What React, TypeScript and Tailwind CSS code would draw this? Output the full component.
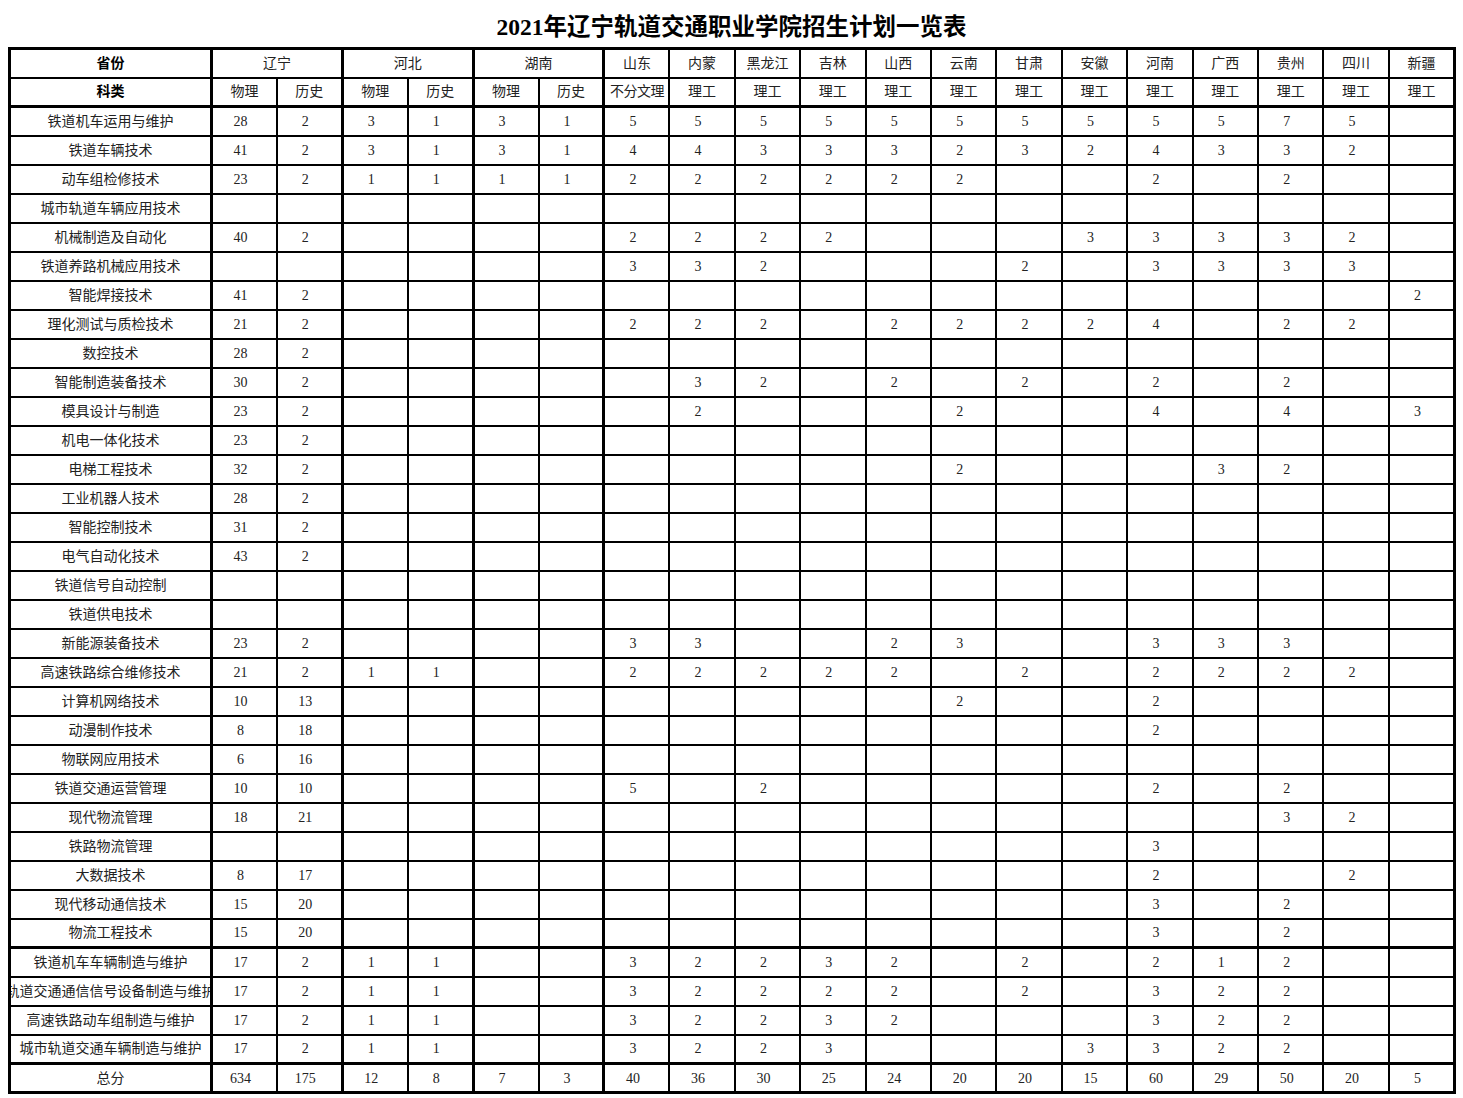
const regions = ["山东", "内蒙", "黑龙江", "吉林", "山西", "云南", "甘肃", "安徽", "河南", "广西", "贵州", "四川", "新疆"];

type Row = [string, ...(string | number)[]];

// 辽宁物理, 辽宁历史, 河北物理, 河北历史, 湖南物理, 湖南历史, then the 13 single columns
const rows: Row[] = [
  ["铁道机车运用与维护", 28, 2, 3, 1, 3, 1, 5, 5, 5, 5, 5, 5, 5, 5, 5, 5, 7, 5, ""],
  ["铁道车辆技术", 41, 2, 3, 1, 3, 1, 4, 4, 3, 3, 3, 2, 3, 2, 4, 3, 3, 2, ""],
  ["动车组检修技术", 23, 2, 1, 1, 1, 1, 2, 2, 2, 2, 2, 2, "", "", 2, "", 2, "", ""],
  ["城市轨道车辆应用技术", "", "", "", "", "", "", "", "", "", "", "", "", "", "", "", "", "", "", ""],
  ["机械制造及自动化", 40, 2, "", "", "", "", 2, 2, 2, 2, "", "", "", 3, 3, 3, 3, 2, ""],
  ["铁道养路机械应用技术", "", "", "", "", "", "", 3, 3, 2, "", "", "", 2, "", 3, 3, 3, 3, ""],
  ["智能焊接技术", 41, 2, "", "", "", "", "", "", "", "", "", "", "", "", "", "", "", "", 2],
  ["理化测试与质检技术", 21, 2, "", "", "", "", 2, 2, 2, "", 2, 2, 2, 2, 4, "", 2, 2, ""],
  ["数控技术", 28, 2, "", "", "", "", "", "", "", "", "", "", "", "", "", "", "", "", ""],
  ["智能制造装备技术", 30, 2, "", "", "", "", "", 3, 2, "", 2, "", 2, "", 2, "", 2, "", ""],
  ["模具设计与制造", 23, 2, "", "", "", "", "", 2, "", "", "", 2, "", "", 4, "", 4, "", 3],
  ["机电一体化技术", 23, 2, "", "", "", "", "", "", "", "", "", "", "", "", "", "", "", "", ""],
  ["电梯工程技术", 32, 2, "", "", "", "", "", "", "", "", "", 2, "", "", "", 3, 2, "", ""],
  ["工业机器人技术", 28, 2, "", "", "", "", "", "", "", "", "", "", "", "", "", "", "", "", ""],
  ["智能控制技术", 31, 2, "", "", "", "", "", "", "", "", "", "", "", "", "", "", "", "", ""],
  ["电气自动化技术", 43, 2, "", "", "", "", "", "", "", "", "", "", "", "", "", "", "", "", ""],
  ["铁道信号自动控制", "", "", "", "", "", "", "", "", "", "", "", "", "", "", "", "", "", "", ""],
  ["铁道供电技术", "", "", "", "", "", "", "", "", "", "", "", "", "", "", "", "", "", "", ""],
  ["新能源装备技术", 23, 2, "", "", "", "", 3, 3, "", "", 2, 3, "", "", 3, 3, 3, "", ""],
  ["高速铁路综合维修技术", 21, 2, 1, 1, "", "", 2, 2, 2, 2, 2, "", 2, "", 2, 2, 2, 2, ""],
  ["计算机网络技术", 10, 13, "", "", "", "", "", "", "", "", "", 2, "", "", 2, "", "", "", ""],
  ["动漫制作技术", 8, 18, "", "", "", "", "", "", "", "", "", "", "", "", 2, "", "", "", ""],
  ["物联网应用技术", 6, 16, "", "", "", "", "", "", "", "", "", "", "", "", "", "", "", "", ""],
  ["铁道交通运营管理", 10, 10, "", "", "", "", 5, "", 2, "", "", "", "", "", 2, "", 2, "", ""],
  ["现代物流管理", 18, 21, "", "", "", "", "", "", "", "", "", "", "", "", "", "", 3, 2, ""],
  ["铁路物流管理", "", "", "", "", "", "", "", "", "", "", "", "", "", "", 3, "", "", "", ""],
  ["大数据技术", 8, 17, "", "", "", "", "", "", "", "", "", "", "", "", 2, "", "", 2, ""],
  ["现代移动通信技术", 15, 20, "", "", "", "", "", "", "", "", "", "", "", "", 3, "", 2, "", ""],
  ["物流工程技术", 15, 20, "", "", "", "", "", "", "", "", "", "", "", "", 3, "", 2, "", ""],
  ["铁道机车车辆制造与维护", 17, 2, 1, 1, "", "", 3, 2, 2, 3, 2, "", 2, "", 2, 1, 2, "", ""],
  ["轨道交通通信信号设备制造与维护", 17, 2, 1, 1, "", "", 3, 2, 2, 2, 2, "", 2, "", 3, 2, 2, "", ""],
  ["高速铁路动车组制造与维护", 17, 2, 1, 1, "", "", 3, 2, 2, 3, 2, "", "", "", 3, 2, 2, "", ""],
  ["城市轨道交通车辆制造与维护", 17, 2, 1, 1, "", "", 3, 2, 2, 3, "", "", "", 3, 3, 2, 2, "", ""],
];

const totals = [634, 175, 12, 8, 7, 3, 40, 36, 30, 25, 24, 20, 20, 15, 60, 29, 50, 20, 5];

const cell = "border-2 border-black h-[29px] p-0 text-center align-middle text-[14px] text-[#222]";
const numCell = "border-2 border-black h-[29px] p-0 pr-2 text-center align-middle text-[14px] text-[#222]";
const nameCell = "border-2 border-r-[3px] border-black h-[29px] p-0 align-middle text-[14px] text-[#222]";

// 辽宁/河北/湖南 groups end with a heavier rule
const groupEnd = (i: number) => (i === 1 || i === 3 || i === 5 ? "border-r-[3px]" : "");

function NameCell({ text, className = "" }: { text: string; className?: string }) {
  return (
    <td className={`${nameCell} ${className}`}>
      <div className="flex justify-center overflow-hidden whitespace-nowrap">
        <span className="shrink-0">{text}</span>
      </div>
    </td>
  );
}

export default function App() {
  return (
    <div className="w-[1463px] bg-white font-['Liberation_Serif','Noto_Sans_CJK_SC',serif] text-black">
      <div className="flex h-[47px] items-center justify-center pt-2">
        <h1 className="text-[23.5px] font-bold leading-none">2021年辽宁轨道交通职业学院招生计划一览表</h1>
      </div>

      <table className="ml-[8px] w-[1448px] table-fixed border-collapse border-[3px] border-black">
        <colgroup>
          <col className="w-[202px]" />
          {totals.map((_, i) => (
            <col key={i} />
          ))}
        </colgroup>
        <thead>
          <tr>
            <th className={`${nameCell} text-center font-bold text-black`}>省份</th>
            <th colSpan={2} className={`${cell} border-r-[3px] font-normal`}>辽宁</th>
            <th colSpan={2} className={`${cell} border-r-[3px] font-normal`}>河北</th>
            <th colSpan={2} className={`${cell} border-r-[3px] font-normal`}>湖南</th>
            {regions.map((r) => (
              <th key={r} className={`${cell} font-normal`}>{r}</th>
            ))}
          </tr>
          <tr>
            <th className={`${nameCell} border-b-[3px] text-center font-bold text-black`}>科类</th>
            {["物理", "历史", "物理", "历史", "物理", "历史"].map((s, i) => (
              <th key={i} className={`${cell} border-b-[3px] font-normal ${groupEnd(i)}`}>{s}</th>
            ))}
            <th className={`${cell} border-b-[3px] font-normal tracking-[-0.5px]`}>不分文理</th>
            {regions.slice(1).map((r) => (
              <th key={r} className={`${cell} border-b-[3px] font-normal`}>理工</th>
            ))}
          </tr>
        </thead>
        <tbody>
          {rows.map(([name, ...vals], ri) => {
            const thick = ri === 29 ? "border-t-[3px]" : "";
            return (
              <tr key={name}>
                <NameCell text={name} className={thick} />
                {vals.map((v, i) => (
                  <td key={i} className={`${numCell} ${thick} ${groupEnd(i)}`}>
                    {v}
                  </td>
                ))}
              </tr>
            );
          })}
          <tr>
            <NameCell text="总分" className="border-t-[3px]" />
            {totals.map((v, i) => (
              <td key={i} className={`${numCell} border-t-[3px] ${groupEnd(i)}`}>
                {v}
              </td>
            ))}
          </tr>
        </tbody>
      </table>
    </div>
  );
}
